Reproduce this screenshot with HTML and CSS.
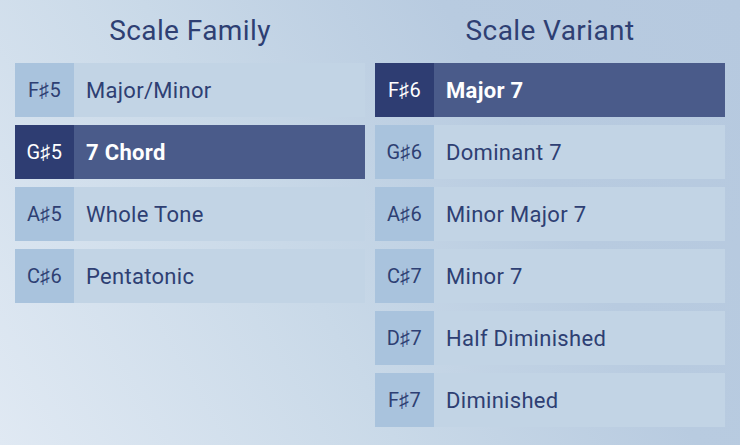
FILE: index.html
```html
<!DOCTYPE html>
<html>
<head>
<meta charset="utf-8">
<link rel="stylesheet" href="styles.css">
</head>
<body>
<div class="app">
  <section class="column">
    <h2 class="title">Scale Family</h2>
    <div class="list">
      <div class="row"><span class="note">F♯5</span><span class="label">Major/Minor</span></div>
      <div class="row selected"><span class="note">G♯5</span><span class="label">7 Chord</span></div>
      <div class="row"><span class="note">A♯5</span><span class="label">Whole Tone</span></div>
      <div class="row"><span class="note">C♯6</span><span class="label">Pentatonic</span></div>
    </div>
  </section>
  <section class="column">
    <h2 class="title">Scale Variant</h2>
    <div class="list">
      <div class="row selected"><span class="note">F♯6</span><span class="label">Major 7</span></div>
      <div class="row"><span class="note">G♯6</span><span class="label">Dominant 7</span></div>
      <div class="row"><span class="note">A♯6</span><span class="label">Minor Major 7</span></div>
      <div class="row"><span class="note">C♯7</span><span class="label">Minor 7</span></div>
      <div class="row"><span class="note">D♯7</span><span class="label">Half Diminished</span></div>
      <div class="row"><span class="note">F♯7</span><span class="label">Diminished</span></div>
    </div>
  </section>
</div>
</body>
</html>
```
FILE: styles.css
```css
html, body {
  margin: 0;
  padding: 0;
  width: 740px;
  height: 445px;
  overflow: hidden;
}
body {
  background: linear-gradient(60deg, #e0e9f3 0%, #c9d9e8 40%, #b8cbe0 70%, #b6c9df 100%);
  font-family: "Roboto", "Liberation Sans", sans-serif;
  color: #2e3f73;
}
.app {
  display: flex;
  gap: 10px;
  padding: 0 15px;
}
.column {
  width: 350px;
  display: flex;
  flex-direction: column;
}
.title {
  margin: 0;
  height: 55px;
  padding-top: 11px;
  box-sizing: border-box;
  font-size: 28px;
  font-weight: 400;
  text-align: center;
  line-height: 40px;
  letter-spacing: 0.4px;
  color: #2e3f73;
}
.list {
  margin-top: 8px;
  display: flex;
  flex-direction: column;
  gap: 8px;
}
.row {
  display: flex;
  height: 54px;
  background: #c2d4e5;
}
.note {
  width: 59px;
  flex: none;
  background: #a9c3dd;
  display: flex;
  align-items: center;
  justify-content: center;
  font-size: 20px;
  letter-spacing: 0.3px;
}
.label {
  flex: 1;
  display: flex;
  align-items: center;
  padding-left: 12px;
  font-size: 22px;
  letter-spacing: 0.3px;
}
.row.selected {
  background: #4a5b8a;
  color: #ffffff;
}
.row.selected .note {
  background: #2e3d72;
}
.row.selected .label {
  font-weight: 700;
}
```
